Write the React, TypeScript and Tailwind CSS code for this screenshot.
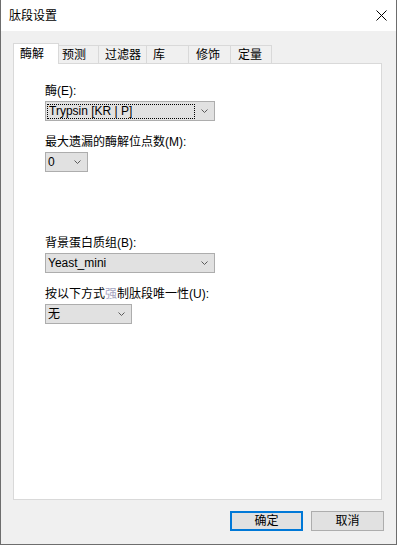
import { ReactNode } from 'react';

const FONT = { fontFamily: '"Liberation Sans", "Noto Sans CJK SC", sans-serif' };

function Chevron() {
  return (
    <svg width="7" height="4" viewBox="0 0 7 4" className="shrink-0">
      <polyline points="0.5,0.5 3.5,3.5 6.5,0.5" fill="none" stroke="#5a5a5a" strokeWidth="1" />
    </svg>
  );
}

interface ComboProps {
  value: string;
  width: string;
  focused?: boolean;
}

function Combo({ value, width, focused = false }: ComboProps) {
  return (
    <div
      className={`mt-[2px] flex h-[20px] items-center justify-between border border-[#adadad] bg-[#e1e1e1] pr-[6px] text-[12px] leading-[14px] text-black ${width}`}
    >
      {focused ? (
        <span className="ml-[1px] flex h-[15px] w-[148px] items-center border border-dotted border-black pl-[1px]">
          {value}
        </span>
      ) : (
        <span className="pl-[2px]">{value}</span>
      )}
      <Chevron />
    </div>
  );
}

function Label({ children, className = '' }: { children: ReactNode; className?: string }) {
  return <div className={`text-[12px] leading-[16px] text-black ${className}`}>{children}</div>;
}

const TABS = [
  { name: '预测', cls: 'w-[40px] pl-[3px]' },
  { name: '过滤器', cls: 'w-[48px] pl-[6px]' },
  { name: '库', cls: 'w-[42px] pl-[6px]' },
  { name: '修饰', cls: 'w-[42px] pl-[7px]' },
  { name: '定量', cls: 'w-[41px] pl-[7px]' },
];

export default function App() {
  return (
    <div
      style={FONT}
      className="flex h-[545px] w-[397px] flex-col border-x border-b border-[#6d6d6d] bg-[#f0f0f0]"
    >
      {/* title bar */}
      <div className="flex h-[31px] shrink-0 items-center justify-between bg-white pl-[8px] pr-[9px]">
        <span className="text-[12px] leading-[16px] text-black">肽段设置</span>
        <svg width="11" height="11" viewBox="0 0 11 11">
          <path d="M0.5 0.5 L10.5 10.5 M10.5 0.5 L0.5 10.5" stroke="#000" strokeWidth="1" />
        </svg>
      </div>

      <div className="pl-[12px] pt-[12px]">
        {/* tabs */}
        <div className="flex h-[20px] items-end">
          <div className="relative z-10 -mb-px flex h-[21px] w-[46px] items-center border-x border-t border-[#d9d9d9] bg-white pl-[6px] text-[12px] leading-[16px] text-black">
            酶解
          </div>
          {TABS.map((t) => (
            <div
              key={t.name}
              className={`flex h-[18px] items-center border-r border-t border-[#d9d9d9] bg-[#f0f0f0] text-[12px] leading-[16px] text-black ${t.cls}`}
            >
              {t.name}
            </div>
          ))}
        </div>

        {/* panel */}
        <div className="h-[437px] w-[369px] border border-[#d9d9d9] bg-white pl-[31px] pt-[19px]">
          <Label>酶(E):</Label>
          <Combo value="Trypsin [KR | P]" width="w-[170px]" focused />

          <Label className="mt-[13px]">最大遗漏的酶解位点数(M):</Label>
          <Combo value="0" width="w-[43px]" />

          <Label className="mt-[63px]">背景蛋白质组(B):</Label>
          <Combo value="Yeast_mini" width="w-[170px]" />

          <Label className="mt-[13px]">
            按以下方式<span className="text-[#a3a3c0]">强</span>制肽段唯一性(U):
          </Label>
          <Combo value="无" width="w-[87px]" />
        </div>
      </div>

      {/* buttons */}
      <div className="mt-[11px] flex justify-end gap-[8px] pr-[12px]">
        <button className="h-[20px] w-[73px] border-2 border-[#0078d7] bg-[#e1e1e1] text-[12px] leading-[14px] text-black">
          确定
        </button>
        <button className="h-[20px] w-[73px] border border-[#adadad] bg-[#e1e1e1] text-[12px] leading-[14px] text-black">
          取消
        </button>
      </div>
    </div>
  );
}
